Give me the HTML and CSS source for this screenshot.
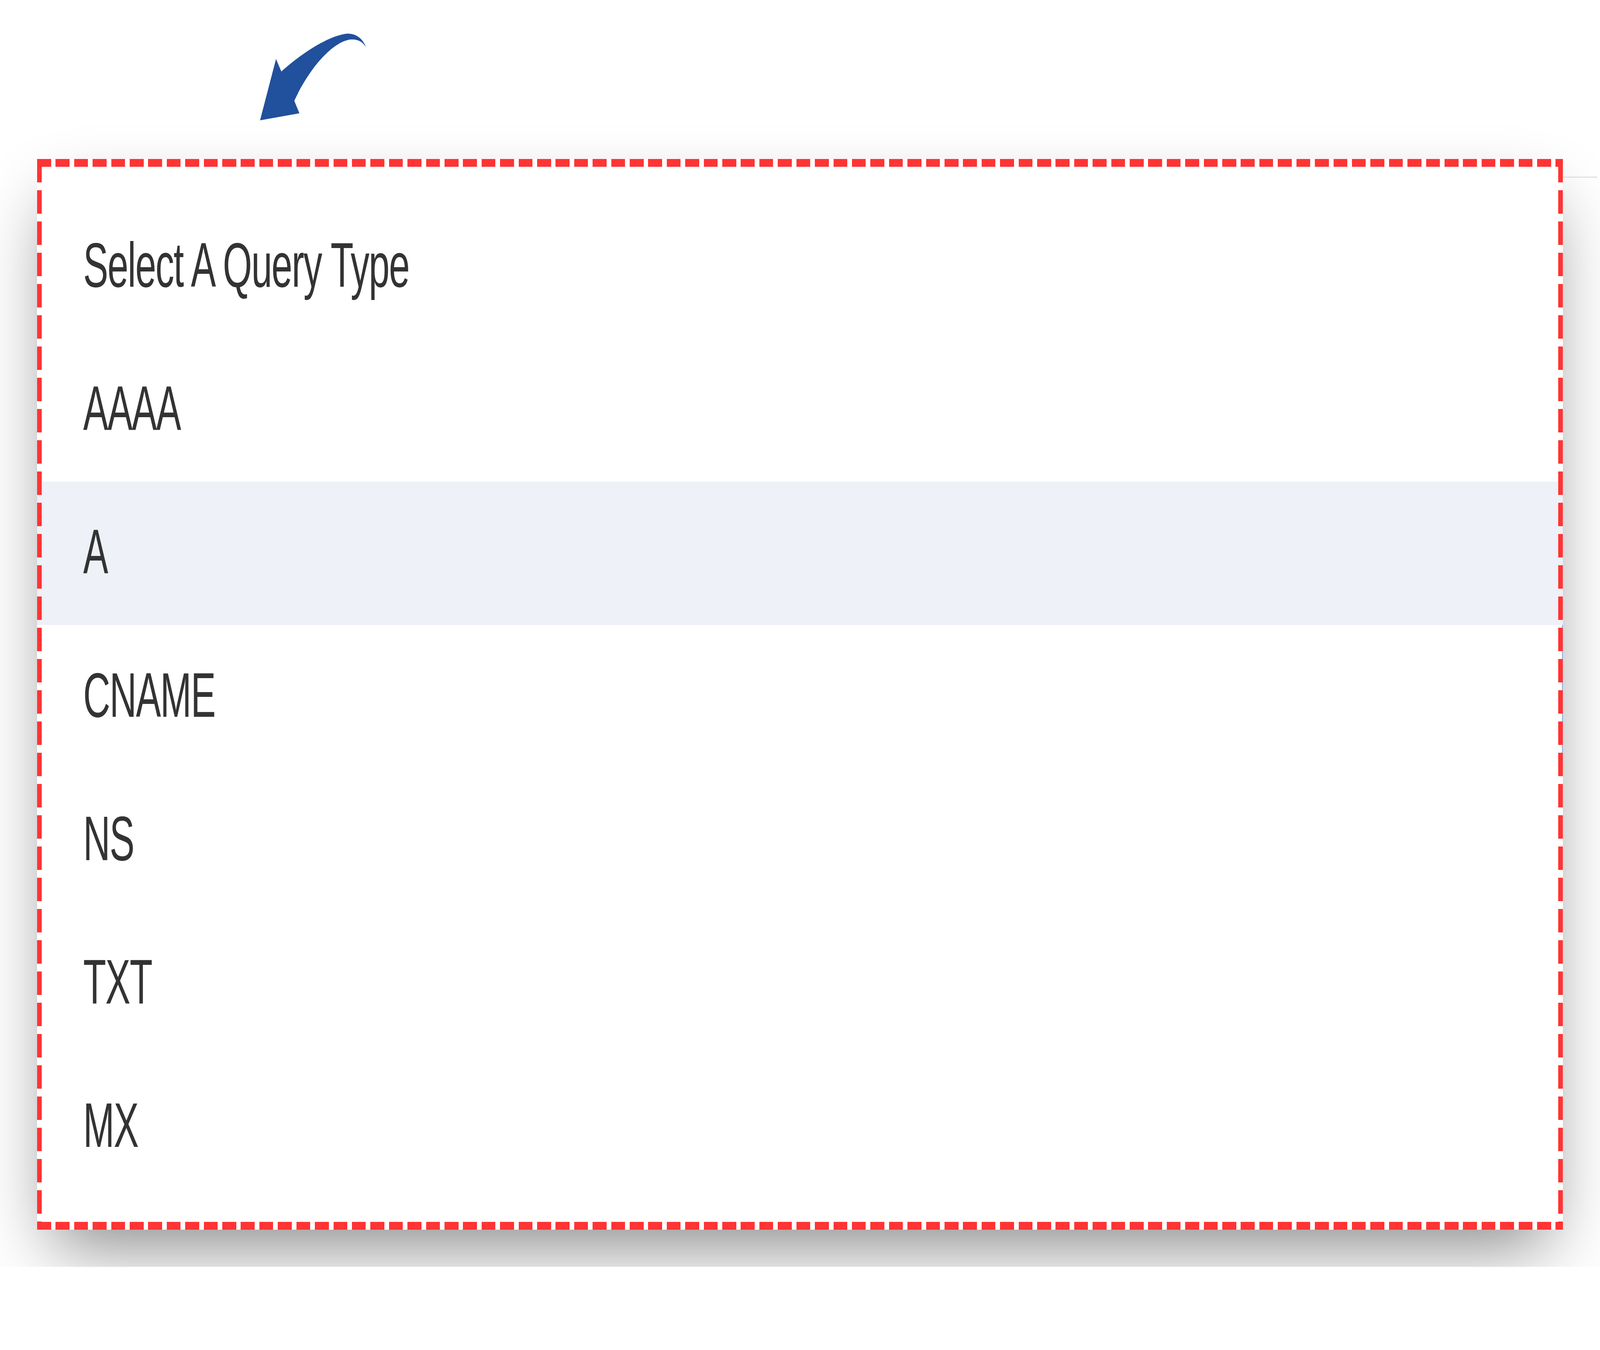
FILE: index.html
```html
<!DOCTYPE html>
<html lang="en">
<head>
    <meta charset="UTF-8">
    <meta name="viewport" content="width=device-width, initial-scale=1.0">
    <title>Query Type</title>
    <link rel="stylesheet" href="styles.css">
</head>
<body>
    <div class="shot">
        <div class="head">
            <svg class="pointer" viewBox="1110 70 480 260" preserveAspectRatio="none" xmlns="http://www.w3.org/2000/svg">
                <path d="M1123 308 L1192 151 L1215 183 C1300 138 1420 90 1502 86 C1540 86 1568 100 1581 121 C1565 106 1545 100 1515 101 C1440 106 1340 170 1271 258 L1293 290 Z" fill="#21509c"/>
            </svg>
        </div>

        <!-- dropdown list of the select -->
        <div class="dropdown">
            <ul class="options">
                <li><span>Select A Query Type</span></li>
                <li><span>AAAA</span></li>
                <li class="active"><span>A</span></li>
                <li><span>CNAME</span></li>
                <li><span>NS</span></li>
                <li><span>TXT</span></li>
                <li><span>MX</span></li>
            </ul>
        </div>
    </div>
</body>
</html>
```

FILE: styles.css
```css
/* one unit of the 6912x3456 design, across and down */
:root {
    --px: calc(100vw / 6912);
    --py: calc(100vh / 3456);
}

body {
    margin: 0;
    background: #fff;
    overflow: hidden;
    font-family: "Liberation Sans", Arial, sans-serif;
}

/* cropped screenshot area */
.shot {
    height: calc(3243 * var(--py));
    overflow: hidden;
}

.head {
    height: calc(407 * var(--py));
}

.pointer {
    display: block;
    width: calc(480 * var(--px));
    height: calc(260 * var(--py));
    margin-left: calc(1110 * var(--px));
    padding-top: calc(70 * var(--py));
}

/* the open list */
.dropdown {
    position: relative;
    margin: 0 calc(161 * var(--px)) 0 calc(160 * var(--px));
    padding: calc(92 * var(--py)) 0 calc(80 * var(--py));
    background: #fff;
    box-shadow: 0 calc(80 * var(--py)) calc(170 * var(--py)) calc(-40 * var(--py)) rgba(0, 0, 0, 0.48);
}

/* border of the select field peeking out on the right */
.dropdown::before {
    content: "";
    position: absolute;
    left: 100%;
    top: calc(45 * var(--py));
    width: calc(150 * var(--px));
    height: calc(3 * var(--py));
    background: #e1e1e1;
}

/* red dashed annotation */
.dropdown::after {
    content: "";
    position: absolute;
    inset: 0;
    pointer-events: none;
    --dx: calc(60 * var(--px));
    --gx: calc(80 * var(--px));
    --dy: calc(60 * var(--py));
    --gy: calc(80 * var(--py));
    background:
        repeating-linear-gradient(90deg, #ff3434 0 var(--dx), transparent var(--dx) var(--gx)) left top / 100% calc(20 * var(--py)) no-repeat,
        repeating-linear-gradient(90deg, #ff3434 0 var(--dx), transparent var(--dx) var(--gx)) left bottom / 100% calc(20 * var(--py)) no-repeat,
        repeating-linear-gradient(180deg, #ff3434 0 var(--dy), transparent var(--dy) var(--gy)) left top / calc(20 * var(--px)) 100% no-repeat,
        repeating-linear-gradient(180deg, #ff3434 0 var(--dy), transparent var(--dy) var(--gy)) right top / calc(20 * var(--px)) 100% no-repeat;
}

.options {
    list-style: none;
    margin: 0;
    padding: 0;
}

.options li {
    padding: 0 0 calc(10 * var(--py)) calc(200 * var(--px));
    line-height: calc(357 * var(--py));
    font-size: calc(162 * var(--py));
    color: #333;
}

/* glyphs keep the design's proportions when the window is not 2:1 */
.options li span {
    display: inline-block;
    letter-spacing: calc(-3 * var(--py));
    transform-origin: left center;
    transform: scaleX(tan(atan2(var(--px), var(--py))));
}

.options li.active {
    background-color: #eef1f8;
}

/* focus edge of the select, showing along the right side */
.options li:nth-child(4) {
    box-shadow: inset calc(-20 * var(--px)) 0 0 calc(-16 * var(--px)) #8fb1e0;
}
```
